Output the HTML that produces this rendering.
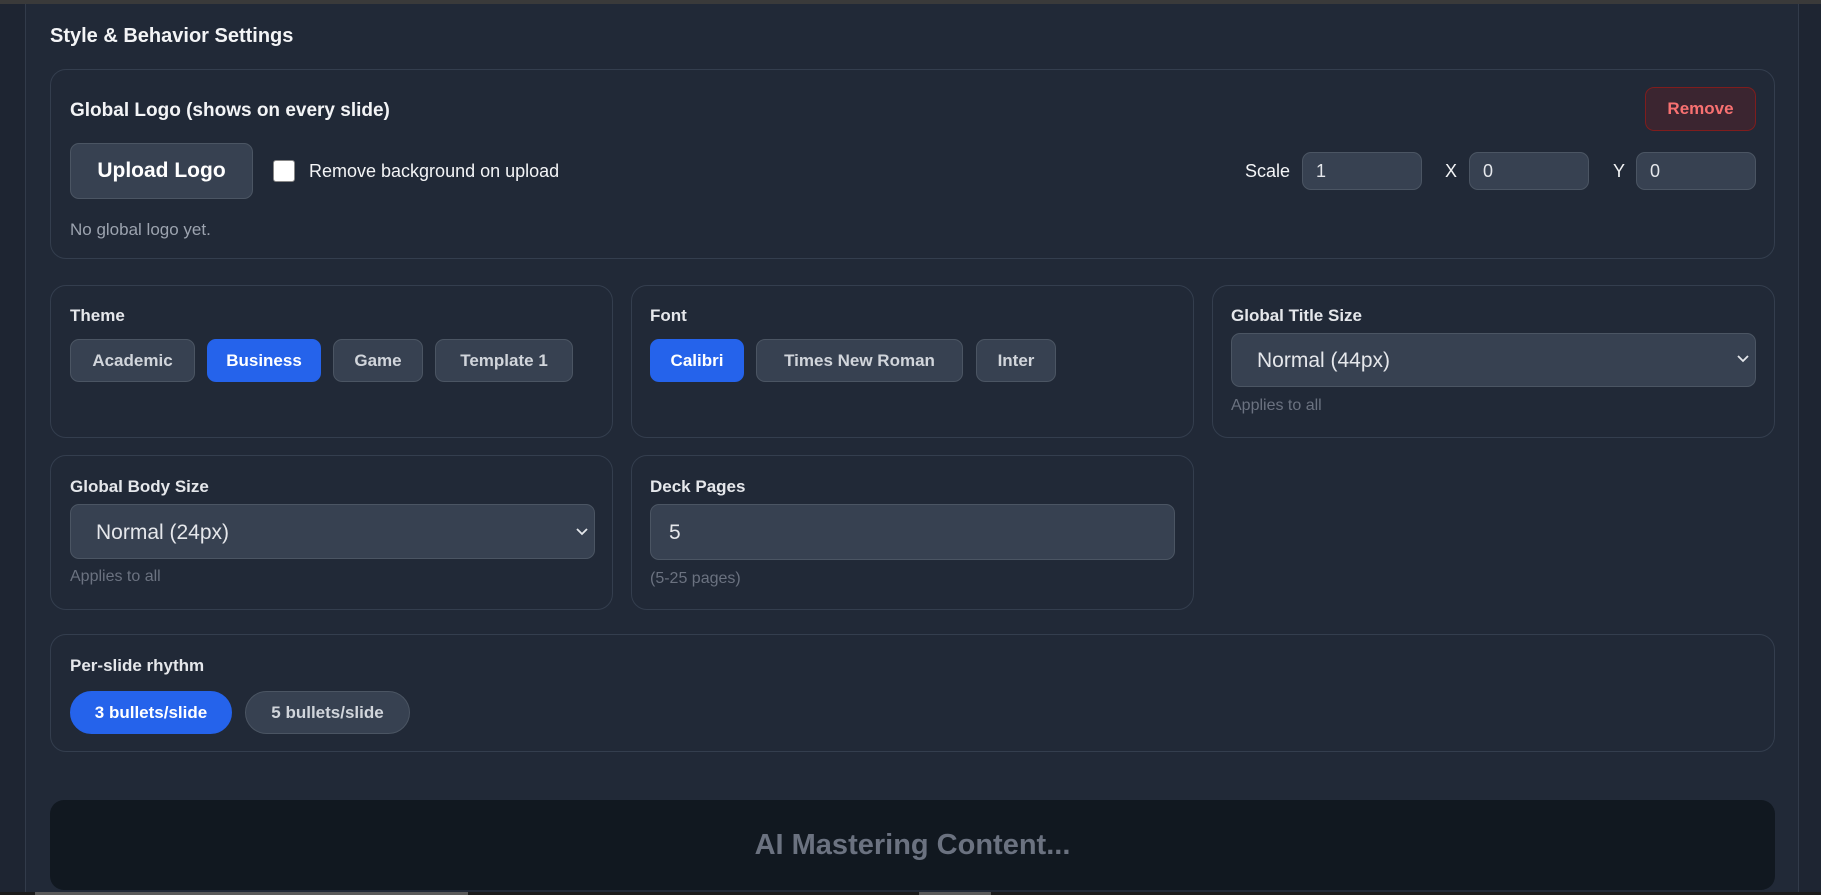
<!DOCTYPE html>
<html><head><meta charset="utf-8"><style>
*{box-sizing:border-box;margin:0;padding:0}
body{width:1821px;height:895px;background:#1e2532;font-family:"Liberation Sans",sans-serif;position:relative;overflow:hidden;color:#e5e7eb}
.a{position:absolute}
.topbar{left:0;top:0;width:1821px;height:4px;background:#3a3a3a}
.panel{left:25px;top:4px;width:1774px;height:891px;background:#212937;border-left:1px solid #323b4a;border-right:1px solid #323b4a}
.card{background:#212937;border:1px solid #343e4e;border-radius:16px}
.h{font-weight:bold;color:#f3f4f6}
.lbl{font-weight:bold;font-size:17px;color:#e5e7eb}
.pill{height:43px;border-radius:9px;background:#374151;border:1px solid #4b5563;color:#d1d5db;font-weight:bold;font-size:17px;display:flex;align-items:center;justify-content:center}
.on{background:#2563eb;border-color:#2563eb;color:#fff}
.inp{background:#374151;border:1px solid #4b5563;border-radius:9px;color:#e5e7eb;display:flex;align-items:center}
.sub{color:#6b7280;font-size:16px}
</style></head><body>
<div class="a topbar"></div>
<div class="a panel"></div>
<div class="a h" style="left:50px;top:25px;font-size:20px">Style &amp; Behavior Settings</div>

<div class="a card" style="left:50px;top:69px;width:1725px;height:190px"></div>
<div class="a h" style="left:70px;top:100px;font-size:19px">Global Logo (shows on every slide)</div>
<div class="a" style="left:1645px;top:87px;width:111px;height:44px;background:#3b2530;border:1px solid #7f1d1d;border-radius:9px;color:#f87171;font-weight:bold;font-size:17px;display:flex;align-items:center;justify-content:center">Remove</div>
<div class="a" style="left:70px;top:143px;width:183px;height:56px;background:#374151;border:1px solid #4b5563;border-radius:9px;color:#fff;font-weight:bold;font-size:21px;display:flex;align-items:center;justify-content:center">Upload Logo</div>
<div class="a" style="left:273px;top:160px;width:22px;height:22px;background:#fff;border:1px solid #888;border-radius:3px"></div>
<div class="a" style="left:309px;top:161px;font-size:18px;color:#f3f4f6">Remove background on upload</div>
<div class="a" style="left:1245px;top:161px;font-size:18px;color:#f3f4f6">Scale</div>
<div class="a inp" style="left:1302px;top:152px;width:120px;height:38px;padding-left:13px;font-size:18px">1</div>
<div class="a" style="left:1445px;top:161px;font-size:18px;color:#f3f4f6">X</div>
<div class="a inp" style="left:1469px;top:152px;width:120px;height:38px;padding-left:13px;font-size:18px">0</div>
<div class="a" style="left:1613px;top:161px;font-size:18px;color:#f3f4f6">Y</div>
<div class="a inp" style="left:1636px;top:152px;width:120px;height:38px;padding-left:13px;font-size:18px">0</div>
<div class="a" style="left:70px;top:220px;font-size:17px;color:#9ca3af">No global logo yet.</div>

<div class="a card" style="left:50px;top:285px;width:563px;height:153px"></div>
<div class="a lbl" style="left:70px;top:306px">Theme</div>
<div class="a pill" style="left:70px;top:339px;width:125px">Academic</div>
<div class="a pill on" style="left:207px;top:339px;width:114px">Business</div>
<div class="a pill" style="left:333px;top:339px;width:90px">Game</div>
<div class="a pill" style="left:435px;top:339px;width:138px">Template 1</div>

<div class="a card" style="left:631px;top:285px;width:563px;height:153px"></div>
<div class="a lbl" style="left:650px;top:306px">Font</div>
<div class="a pill on" style="left:650px;top:339px;width:94px">Calibri</div>
<div class="a pill" style="left:756px;top:339px;width:207px">Times New Roman</div>
<div class="a pill" style="left:976px;top:339px;width:80px">Inter</div>

<div class="a card" style="left:1212px;top:285px;width:563px;height:153px"></div>
<div class="a lbl" style="left:1231px;top:306px">Global Title Size</div>
<div class="a inp" style="left:1231px;top:333px;width:525px;height:54px;padding-left:25px;font-size:21px;padding-top:2px">Normal (44px)</div>
<svg class="a" style="left:1737px;top:355px" width="12" height="8"><path d="M1 1l5 5 5-5" stroke="#e5e7eb" stroke-width="1.8" fill="none"/></svg>
<div class="a sub" style="left:1231px;top:397px">Applies to all</div>

<div class="a card" style="left:50px;top:455px;width:563px;height:155px"></div>
<div class="a lbl" style="left:70px;top:477px">Global Body Size</div>
<div class="a inp" style="left:70px;top:504px;width:525px;height:55px;padding-left:25px;font-size:21px;padding-top:2px">Normal (24px)</div>
<svg class="a" style="left:576px;top:528px" width="12" height="8"><path d="M1 1l5 5 5-5" stroke="#e5e7eb" stroke-width="1.8" fill="none"/></svg>
<div class="a sub" style="left:70px;top:568px">Applies to all</div>

<div class="a card" style="left:631px;top:455px;width:563px;height:155px"></div>
<div class="a lbl" style="left:650px;top:477px">Deck Pages</div>
<div class="a inp" style="left:650px;top:504px;width:525px;height:56px;padding-left:18px;font-size:21px;padding-top:2px">5</div>
<div class="a sub" style="left:650px;top:570px">(5-25 pages)</div>

<div class="a card" style="left:50px;top:634px;width:1725px;height:118px"></div>
<div class="a lbl" style="left:70px;top:656px">Per-slide rhythm</div>
<div class="a pill on" style="left:70px;top:691px;width:162px;height:43px;border-radius:22px">3 bullets/slide</div>
<div class="a pill" style="left:245px;top:691px;width:165px;height:43px;border-radius:22px">5 bullets/slide</div>

<div class="a" style="left:50px;top:800px;width:1725px;height:90px;background:#111820;border-radius:14px;color:#6b7280;font-weight:bold;font-size:29px;display:flex;align-items:center;justify-content:center">AI Mastering Content...</div>

<div class="a" style="left:0;top:892px;width:1821px;height:3px;background:#1b1b1b"></div>
<div class="a" style="left:35px;top:892px;width:433px;height:3px;background:#5a5a5a"></div>
<div class="a" style="left:919px;top:892px;width:72px;height:3px;background:#5a5a5a"></div>
</body></html>
